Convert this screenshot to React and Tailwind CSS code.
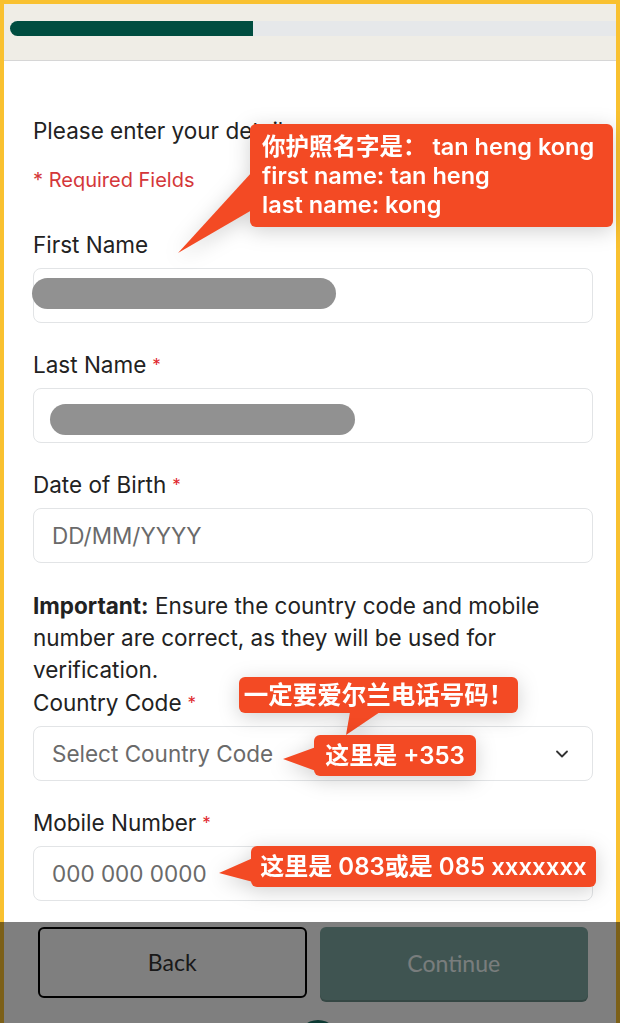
import { ChevronDown } from 'lucide-react';

const font = { fontFamily: 'Inter, "Liberation Sans", sans-serif' };
const cjk = { fontFamily: 'Inter, "Noto Sans CJK SC", sans-serif' };

function Label({ text, required }) {
  return (
    <div className="h-[28px] leading-[28px] text-[22.5px] text-[#222] mb-[9px]">
      {text}
      {required && <span className="text-[#e0262b] text-[17px] ml-[6px] align-top">*</span>}
    </div>
  );
}

function Field({ label, required, placeholder, children }) {
  return (
    <div className="mb-[28px]">
      <Label text={label} required={required} />
      <div className="relative h-[55px] rounded-[8px] border border-[#e2e4e6] bg-white flex items-center px-[18px] text-[22.5px] text-[#6a6a6a]">
        {placeholder}
        {children}
      </div>
    </div>
  );
}

function Callout({ box, tail, children }) {
  return (
    <div className="absolute inset-0 drop-shadow-[0_4px_10px_rgba(0,0,0,0.18)]">
      <svg className="absolute inset-0" width="620" height="1023">
        <polygon points={tail} fill="#f34a24" />
      </svg>
      <div
        className={`absolute rounded-[6px] bg-[#f34a24] text-white font-semibold ${box}`}
        style={cjk}
      >
        {children}
      </div>
    </div>
  );
}

export default function App() {
  return (
    <div className="relative w-[620px] h-[1023px] overflow-hidden bg-[#f9c130] pt-[4px] px-[4px]" style={font}>
      <div className="bg-white h-full">
        <div className="h-[57px] bg-[#efede6] border-b border-[#d6d6d6] pl-[6px] pt-[17px]">
          <div className="h-[15px] rounded-l-full bg-[#e6e8ea] flex">
            <div className="w-[243px] h-full rounded-l-full bg-[#004d40]" />
          </div>
        </div>

        <div className="pl-[29px] pr-[23px] pt-[56px]">
          <p className="h-[28px] leading-[28px] text-[22.5px] text-[#222]">Please enter your details</p>
          <p className="mt-[21px] h-[28px] leading-[28px] text-[20px] text-[#d4373a]">* Required Fields</p>

          <div className="mt-[37px]">
            <Field label="First Name">
              <div className="absolute left-[-2px] top-[9px] w-[304px] h-[31px] rounded-full bg-[#919191]" />
            </Field>
            <Field label="Last Name" required>
              <div className="absolute left-[16px] top-[15px] w-[305px] h-[31px] rounded-full bg-[#919191]" />
            </Field>
            <Field label="Date of Birth" required placeholder="DD/MM/YYYY" />
          </div>

          <p className="-mt-[1px] text-[22.5px] leading-[32px] text-[#222]">
            <span className="font-bold">Important:</span> Ensure the country code and mobile
            <br />
            number are correct, as they will be used for
            <br />
            verification.
          </p>

          <div className="mt-[3px]">
            <div className="mb-[28px]">
              <Label text="Country Code" required />
              <div className="h-[55px] rounded-[8px] border border-[#e2e4e6] flex items-center justify-between pl-[18px] pr-[20px] text-[22.5px] text-[#6a6a6a]">
                Select Country Code
                <ChevronDown size={20} strokeWidth={2.2} className="text-[#333]" />
              </div>
            </div>
            <Field label="Mobile Number" required placeholder="000 000 0000" />
          </div>
        </div>

        <div className="-mt-[2px] pl-[34px] pr-[28px] flex flex-col" style={{ fontFamily: 'Lato, sans-serif' }}>
          <div className="grid grid-cols-2 gap-[13px]">
            <button className="h-[71px] rounded-[6px] border-2 border-black text-[23px] text-[#333]">Back</button>
            <button className="h-[73px] rounded-[6px] bg-[#7ea9a2] shadow-[0_2px_0_#6b8f89] text-[23px] text-[#f3fbfa]">Continue</button>
          </div>
          <div className="mt-[20px] self-center ml-[10px] w-[42px] h-[42px] shrink-0 rounded-full bg-[#1a7466]" />
        </div>
      </div>

      <Callout box="left-[250px] top-[124px] w-[363px] h-[103px] pl-[12px] pt-[8px] text-[23.5px] leading-[29px]" tail="252,172 252,210 178,253">
        <div>你护照名字是：&nbsp;tan heng kong</div>
        <div>first name: tan heng</div>
        <div>last name: kong</div>
      </Callout>
      <Callout box="left-[239px] top-[677px] w-[279px] h-[36px] flex items-center justify-center text-[24.5px]" tail="350,712 380,712 346,735">
        一定要爱尔兰电话号码！
      </Callout>
      <Callout box="left-[314px] top-[735px] w-[162px] h-[41px] flex items-center justify-center text-[24px]" tail="316,747 316,771 283,759">
        这里是 +353
      </Callout>
      <Callout box="left-[251px] top-[846px] w-[345px] h-[41px] flex items-center justify-center text-[24px]" tail="253,858 253,882 219,873">
        这里是 083或是 085 xxxxxxx
      </Callout>

      <div className="absolute inset-x-0 bottom-0 top-[922px] bg-black/50" />
    </div>
  );
}
